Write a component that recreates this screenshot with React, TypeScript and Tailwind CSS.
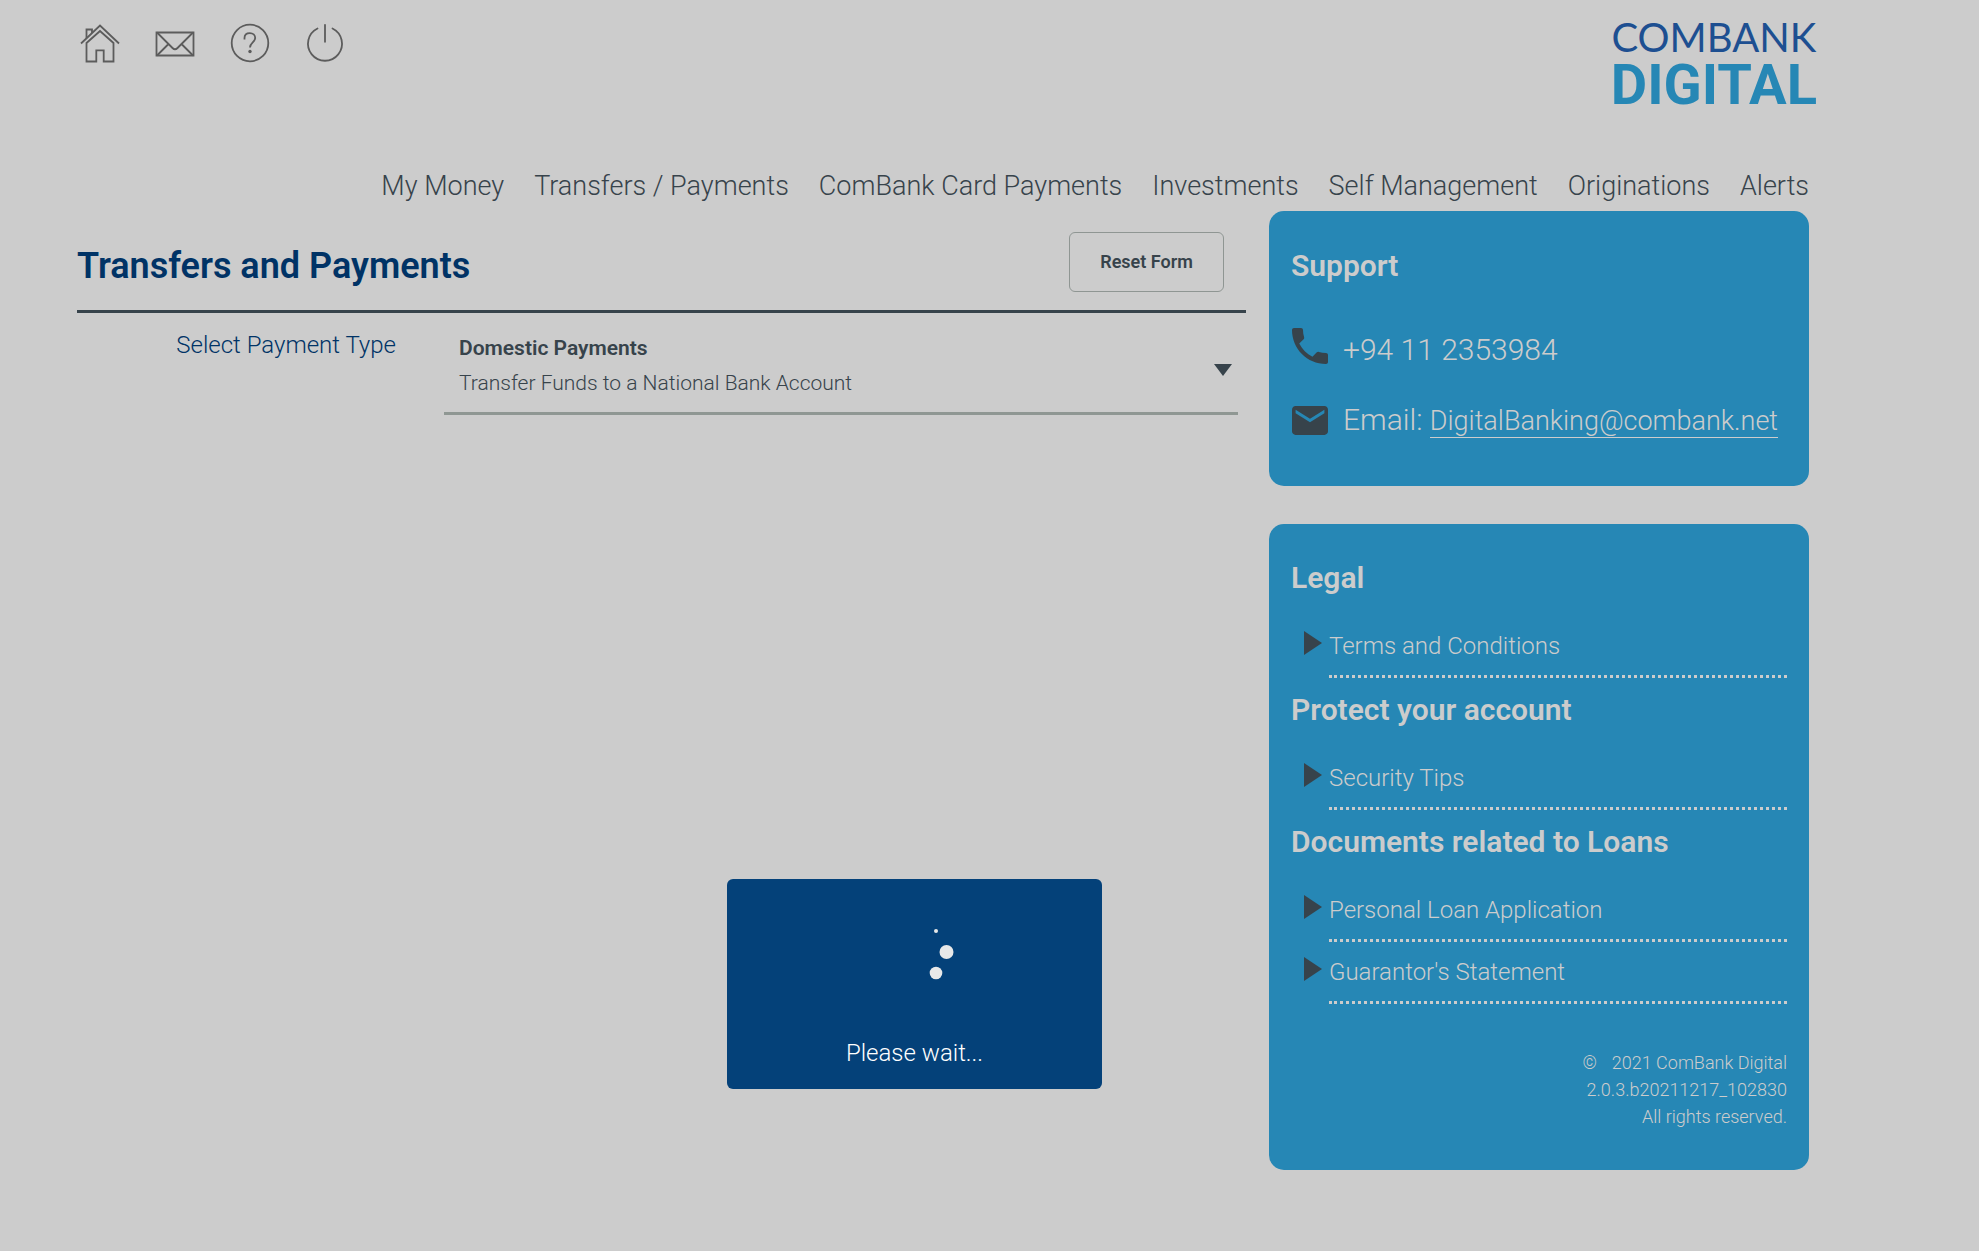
import React from 'react';

type LinkGroup = { title: string; links: string[] };

const navItems = [
    'My Money',
    'Transfers / Payments',
    'ComBank Card Payments',
    'Investments',
    'Self Management',
    'Originations',
    'Alerts',
];

const linkGroups: LinkGroup[] = [
    { title: 'Legal', links: ['Terms and Conditions'] },
    { title: 'Protect your account', links: ['Security Tips'] },
    { title: 'Documents related to Loans', links: ['Personal Loan Application', "Guarantor's Statement"] },
];

const HomeIcon = () => (
    <svg className="w-10 h-10" viewBox="0 0 40 40" fill="none" stroke="currentColor" strokeWidth="1.8">
        <path d="M1 20.5 20 2.5 39 20.5" />
        <path d="M6.5 38.5V20L20 8l13.5 12v18.5h-9.8V27.3h-7.4v11.2z" />
        <path d="M6.5 15V6.500h5.500v3.500" />
    </svg>
);

const EnvelopeIcon = () => (
    <svg className="w-10 h-10" viewBox="0 0 40 40" fill="none" stroke="currentColor" strokeWidth="1.8">
        <path d="M1.500 9.500h37v23h-37z" />
        <path d="M2 9.500 17.500 25q2.500 2.500 5 0L38 9.500M2 32.500l11.500-11.500M38 32.500 26.500 21" />
    </svg>
);

const HelpIcon = () => (
    <svg className="w-10 h-10" viewBox="0 0 40 40" fill="none" stroke="currentColor" strokeWidth="1.8">
        <circle cx="20" cy="20" r="18.3" />
        <path d="M14.500 16.500v-1.500c0-3 2.200-4.800 5.300-4.800s5.400 1.900 5.400 4.900c0 4-5.200 4.800-5.200 9.400" />
        <circle cx="20" cy="28.500" r="1.700" fill="currentColor" stroke="none" />
    </svg>
);

const PowerIcon = () => (
    <svg className="w-10 h-10" viewBox="0 0 40 40" fill="none" stroke="currentColor" strokeWidth="1.8" strokeLinecap="round">
        <path d="M20 1.800v17M12.500 5.500a17 17 0 1 0 15 0" />
    </svg>
);

const toolbar = [
    { label: 'Home', Icon: HomeIcon },
    { label: 'Messages', Icon: EnvelopeIcon },
    { label: 'Help', Icon: HelpIcon },
    { label: 'Log out', Icon: PowerIcon },
];

const Header: React.FC = () => (
    <header>
        <div className="flex justify-between items-start pt-4">
            <div className="flex gap-[35px] pt-[7px] pl-[3px] text-[#5c5c5c]">
                {toolbar.map(({ label, Icon }) => (
                    <button key={label} type="button" aria-label={label}>
                        <Icon />
                    </button>
                ))}
            </div>
            <a href="#" className="-mr-2 flex flex-col items-center">
                <span className="font-['Lato'] text-[40px] leading-[42px] text-[#1d4f91]">COMBANK</span>
                <span className="text-[56px] leading-[54px] font-bold text-[#2687b5]">DIGITAL</span>
            </a>
        </div>
        <nav className="mt-[50px] flex justify-end gap-[30px] text-[27px] leading-[49px] font-light whitespace-nowrap">
            {navItems.map((item) => (
                <a key={item} href="#">{item}</a>
            ))}
        </nav>
    </header>
);

const PaymentForm: React.FC = () => (
    <main className="flex-1 min-w-0">
        <div className="flex items-center justify-between h-[102px] pt-[3px] pr-[22px] border-b-3 border-[#37434b]">
            <h1 className="pt-2 text-[36px] leading-[44px] font-semibold text-[#003366]">Transfers and Payments</h1>
            <button type="button" className="w-[155px] h-[60px] border border-[#8f9693] rounded-md text-lg font-semibold">
                Reset Form
            </button>
        </div>
        <div className="flex pr-2">
            <label htmlFor="payment-type" className="w-[367px] pt-[15px] pr-12 text-right text-[24px] leading-[34px] font-light text-[#003366]">
                Select Payment Type
            </label>
            <div className="flex-1 grid border-b-3 border-[#8f9793]">
                <select
                    id="payment-type"
                    className="[grid-area:1/1] h-[99px] pt-[18px] pb-[47px] pl-[15px] appearance-none bg-transparent text-[21px] leading-[34px] font-semibold"
                >
                    <option>Domestic Payments</option>
                </select>
                <p className="[grid-area:1/1] self-end pb-3 pl-[15px] text-[21px] leading-[34px] font-light pointer-events-none">
                    Transfer Funds to a National Bank Account
                </p>
                <svg className="[grid-area:1/1] self-center justify-self-end mt-[14px] mr-[6px] w-[18px] h-3 pointer-events-none" viewBox="0 0 18 12">
                    <path d="M0 0h18L9 12z" fill="currentColor" />
                </svg>
            </div>
        </div>
    </main>
);

const SupportCard: React.FC = () => (
    <section className="h-[275px] pt-[35px] px-[22px] rounded-[15px] bg-[#2687b5] text-[#cccccc]">
        <h2 className="text-[30px] leading-[40px] font-semibold">Support</h2>
        <div className="flex items-center gap-[15px] mt-11 pl-px text-[30px] leading-[40px] font-light">
            <svg className="shrink-0 w-9 h-9 -mt-2 text-[#37434b]" viewBox="3 3 18 18" fill="currentColor">
                <path d="M6.620 10.790c1.440 2.830 3.760 5.140 6.590 6.590l2.200-2.200c.27-.27.67-.36 1.020-.24 1.120.37 2.330.57 3.570.57.550 0 1 .45 1 1V20c0 .55-.45 1-1 1-9.390 0-17-7.610-17-17 0-.55.45-1 1-1h3.500c.55 0 1 .45 1 1 0 1.250.2 2.450.57 3.570.11.35.03.74-.25 1.020l-2.200 2.200z" />
            </svg>
            +94 11 2353984
        </div>
        <div className="flex items-center gap-[15px] mt-[30px] pl-px text-[30px] leading-[40px] font-light whitespace-nowrap">
            <svg className="shrink-0 w-9 h-[29px] text-[#37434b]" viewBox="2 4 20 16" fill="currentColor">
                <path d="M20 4H4c-1.100 0-1.990.9-1.990 2L2 18c0 1.100.9 2 2 2h16c1.100 0 2-.9 2-2V6c0-1.100-.9-2-2-2zm0 4l-8 5-8-5V6l8 5 8-5v2z" />
            </svg>
            <p>
                Email:{' '}
                <a href="mailto:DigitalBanking@combank.net" className="border-b border-[#cccccc] text-[27px]">
                    DigitalBanking@combank.net
                </a>
            </p>
        </div>
    </section>
);

const LinksCard: React.FC = () => (
    <section className="pt-8 pb-10 px-[22px] rounded-[15px] bg-[#2687b5] text-[#cccccc]">
        {linkGroups.map((group) => (
            <div key={group.title}>
                <h2 className="pt-[2px] text-[30px] leading-[40px] font-semibold">{group.title}</h2>
                <ul className="pt-[26px] pb-[2px] pl-[13px]">
                    {group.links.map((link) => (
                        <li key={link} className="flex gap-[7px] h-[62px]">
                            <svg className="mt-[7px] w-[18px] h-6 text-[#37434b]" viewBox="0 0 18 24">
                                <path d="M0 0v24l18-12z" fill="currentColor" />
                            </svg>
                            <a href="#" className="flex-1 h-[54px] pt-[5px] border-b-3 border-dotted border-[#cccccc] text-[24px] leading-[34px] font-light">
                                {link}
                            </a>
                        </li>
                    ))}
                </ul>
            </div>
        ))}
        <footer className="mt-[35px] text-right text-lg leading-[27px] font-light">
            <p><span className="mr-[15px]">©</span>2021 ComBank Digital</p>
            <p>2.0.3.b20211217_102830</p>
            <p>All rights reserved.</p>
        </footer>
    </section>
);

const LoadingDialog: React.FC = () => (
    <div className="fixed inset-0 flex items-end justify-center pr-[150px] pb-[162px]">
        <div role="dialog" aria-label="Loading" className="flex flex-col items-center w-[375px] h-[210px] pt-[47px] rounded-md bg-[#044179] text-white">
            <svg className="w-20 h-14" viewBox="0 0 80 56" fill="#e8e8e8">
                <circle cx="61" cy="5" r="2" />
                <circle cx="71.500" cy="26" r="7" />
                <circle cx="61" cy="47" r="6.300" />
            </svg>
            <p className="mt-[54px] text-[24px] leading-[34px] font-light">Please wait...</p>
        </div>
    </div>
);

const App: React.FC = () => (
    <div className="min-h-screen pl-[77px] pr-[170px] bg-[#cccccc] text-[#37434b] font-['Roboto',sans-serif]">
        <Header />
        <div className="flex gap-[23px]">
            <PaymentForm />
            <aside className="w-[540px] flex flex-col gap-[38px]">
                <SupportCard />
                <LinksCard />
            </aside>
        </div>
        <LoadingDialog />
    </div>
);

export default App;
